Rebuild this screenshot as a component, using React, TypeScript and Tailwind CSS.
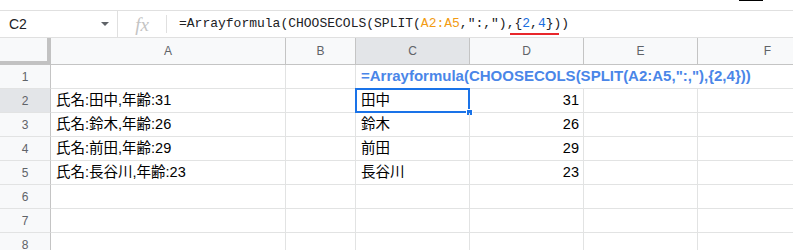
import React from 'react';

const font = 'font-["Liberation_Sans","Noto_Sans_CJK_JP",sans-serif]';

const rows = [
  { n: 1, a: '', c: '', d: '' },
  { n: 2, a: '氏名:田中,年齢:31', c: '田中', d: '31' },
  { n: 3, a: '氏名:鈴木,年齢:26', c: '鈴木', d: '26' },
  { n: 4, a: '氏名:前田,年齢:29', c: '前田', d: '29' },
  { n: 5, a: '氏名:長谷川,年齢:23', c: '長谷川', d: '23' },
  { n: 6, a: '', c: '', d: '' },
  { n: 7, a: '', c: '', d: '' },
  { n: 8, a: '', c: '', d: '' },
];

const cell = 'h-[24px] shrink-0 border-r border-b border-[#e2e3e3] flex items-center';

const FormulaBar: React.FC = () => (
  <div className="relative flex h-[28px] items-center border-y border-[#e0e0e0] bg-white">
    <div className="flex h-full w-[118px] shrink-0 items-center justify-between border-r border-[#e0e0e0] pl-[9px] pr-[8px]">
      <span className={`${font} text-[14px] text-[#202124]`}>C2</span>
      <span className="h-0 w-0 border-x-[4px] border-t-[4px] border-x-transparent border-t-[#5f6368]" />
    </div>
    <div className="flex h-full w-[48px] shrink-0 items-center justify-center">
      <span className='font-["Liberation_Serif",serif] text-[19px] italic leading-none text-[#c4c4c4]'>fx</span>
    </div>
    <div className="h-[18px] w-px bg-[#e0e0e0]" />
    <div className='pl-[12px] font-["Liberation_Mono",monospace] text-[13px] whitespace-nowrap text-[#202124]'>
      =Arrayformula(CHOOSECOLS(SPLIT(<span className="text-[#f29b12]">A2:A5</span>,":,"),{'{'}
      <span className="text-[#1a6ee0]">2</span>,<span className="text-[#1a6ee0]">4</span>{'}'}))
    </div>
    {/* red annotation line */}
    <div className="absolute left-[510px] top-[22px] h-[2px] w-[49px] bg-[#e8262b]" />
  </div>
);

const HeaderRow: React.FC = () => {
  const cols = [
    { l: 'A', w: 'w-[235px]' },
    { l: 'B', w: 'w-[70px]' },
    { l: 'C', w: 'w-[114px]', sel: true },
    { l: 'D', w: 'w-[114px]' },
    { l: 'E', w: 'w-[114px]' },
    { l: 'F', w: 'w-[140px]' },
  ];
  return (
    <div className="flex h-[27px]">
      <div className="relative h-full w-[51px] shrink-0 bg-[#f8f9fa]">
        <div className="absolute right-0 top-0 h-full w-[4px] bg-[#c2c2c2]" />
        <div className="absolute bottom-0 left-0 h-[4px] w-full bg-[#c2c2c2]" />
      </div>
      {cols.map((c) => (
        <div
          key={c.l}
          className={`${c.w} ${c.sel ? 'bg-[#e3e5e8]' : 'bg-[#f8f9fa]'} flex h-full shrink-0 items-center justify-center border-r border-b border-[#c4c4c4] ${font} text-[12px] text-[#5f6368]`}
        >
          {c.l}
        </div>
      ))}
    </div>
  );
};

const App: React.FC = () => (
  <div className="h-[250px] w-[793px] overflow-hidden bg-white">
    <div className="flex h-[10px] pl-[739px]">
      <div className="h-px w-[24px] bg-black" />
    </div>
    <FormulaBar />
    <HeaderRow />
    {rows.map((r) => (
      <div key={r.n} className="flex">
        <div
          className={`${cell} w-[51px] justify-center border-r-[#c4c4c4] ${r.n === 2 ? 'bg-[#e3e5e8]' : 'bg-[#f8f9fa]'} ${font} text-[12px] text-[#5f6368]`}
        >
          {r.n}
        </div>
        <div className={`${cell} w-[235px] pl-[5px] ${font} text-[14.5px] text-black`}>{r.a}</div>
        <div className={`${cell} w-[70px]`} />
        {r.n === 1 ? (
          <div className={`${cell} w-[482px] pl-[5px] ${font} text-[15px] font-bold whitespace-nowrap text-[#4a86e8]`}>
            =Arrayformula(CHOOSECOLS(SPLIT(A2:A5,":,"),{'{'}2,4{'}'}))
          </div>
        ) : (
          <>
            <div className={`${cell} relative w-[114px] pl-[5px] ${font} text-[14.5px] text-black`}>
              {r.c}
              {r.n === 2 && (
                <>
                  <div className="absolute -left-px -top-px h-[25px] w-[115px] border-2 border-[#1a73e8]" />
                  <div className="absolute -bottom-[4px] -right-[4px] h-[7px] w-[7px] border border-white bg-[#1a73e8]" />
                </>
              )}
            </div>
            <div className={`${cell} w-[114px] justify-end pr-[4px] ${font} text-[14.5px] text-black`}>{r.d}</div>
            <div className={`${cell} w-[114px]`} />
            <div className={`${cell} w-[140px]`} />
          </>
        )}
      </div>
    ))}
  </div>
);

export default App;
